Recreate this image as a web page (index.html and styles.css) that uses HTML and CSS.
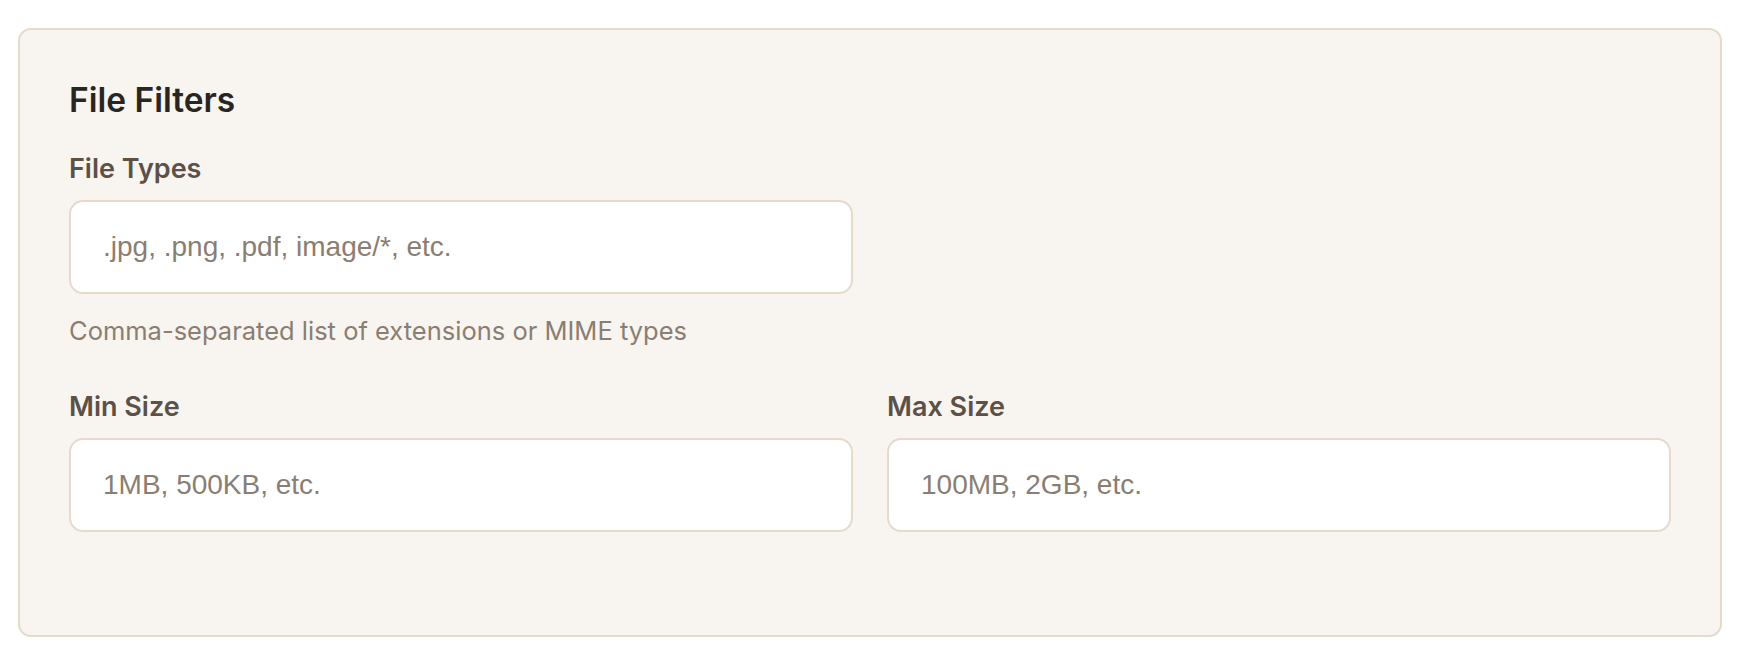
FILE: index.html
```html
<!DOCTYPE html>
<html lang="en">

<head>
    <meta charset="UTF-8">
    <title>File Filters</title>
    <link rel="stylesheet" href="styles.css">
</head>

<body>
    <div class="card">
        <h2 class="title">File Filters</h2>
        <div class="fields">
            <div class="field">
                <label class="label" for="types">File Types</label>
                <input class="input" type="text" id="types" placeholder=".jpg, .png, .pdf, image/*, etc.">
                <div class="hint">Comma-separated list of extensions or MIME types</div>
            </div>
            <div></div>
            <div class="field">
                <label class="label" for="min">Min Size</label>
                <input class="input" type="text" id="min" placeholder="1MB, 500KB, etc.">
            </div>
            <div class="field">
                <label class="label" for="max">Max Size</label>
                <input class="input" type="text" id="max" placeholder="100MB, 2GB, etc.">
            </div>
        </div>
    </div>
</body>

</html>
```

FILE: styles.css
```css
body {
    margin: 0;
    background-color: #fff;
    font-family: Inter, "Noto Sans", sans-serif;
}

.card {
    margin: 28px 18px;
    padding: 50px 49px 103px;
    border: 2px solid #e6dacb;
    border-radius: 13px;
    background-color: #f8f5f0;
}

.title {
    margin: 0 0 29px;
    font-size: 33.5px;
    line-height: 40px;
    font-weight: 600;
    color: #2a2521;
}

.fields {
    display: grid;
    grid-template-columns: 1fr 1fr;
    column-gap: 34px;
    row-gap: 37px;
}

.field {
    display: flex;
    flex-direction: column;
}

.label {
    margin-bottom: 12px;
    font-size: 27px;
    line-height: 39px;
    font-weight: 600;
    color: #5c5047;
}

.input {
    box-sizing: border-box;
    width: 100%;
    height: 94px;
    margin: 0;
    padding: 0 32px;
    border: 2px solid #e6dacb;
    border-radius: 14px;
    outline: 0;
    background-color: #fff;
    font-family: "Liberation Sans", Arial, sans-serif;
    font-size: 28px;
    color: #3a332d;
}

.input::placeholder {
    color: #8a7e72;
}

.hint {
    margin-top: 17px;
    font-size: 25.5px;
    line-height: 39px;
    color: #8a7e72;
}
```
